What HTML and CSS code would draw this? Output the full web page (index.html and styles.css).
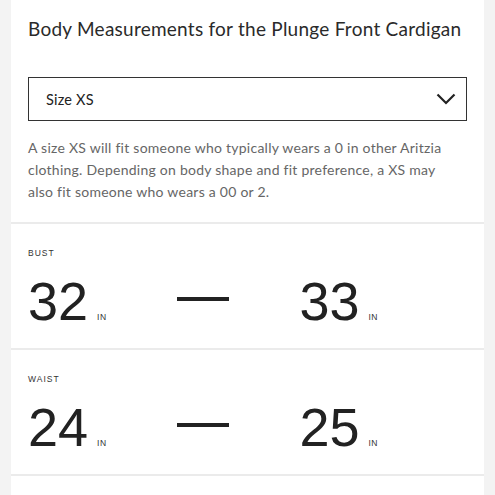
FILE: index.html
```html
<!DOCTYPE html>
<html lang="en">
<head>
<meta charset="utf-8">
<title>Body Measurements</title>
<link rel="stylesheet" href="styles.css">
</head>
<body>
<main class="panel">
  <section class="intro">
    <h1 class="title">Body Measurements for the Plunge Front Cardigan</h1>
    <div class="select">
      <span class="select-label">Size XS</span>
      <svg class="chevron" width="20" height="12" viewBox="0 0 20 12"><path d="M1.5 1.5 L10 10 L18.5 1.5" fill="none" stroke="#222" stroke-width="2.2"/></svg>
    </div>
    <p class="desc">A size XS will fit someone who typically wears a 0 in other Aritzia clothing. Depending on body shape and fit preference, a XS may also fit someone who wears a 00 or 2.</p>
  </section>
  <section class="measure">
    <div class="label">Bust</div>
    <div class="range">
      <div class="val"><span class="num">32</span><span class="unit">IN</span></div>
      <div class="dash"></div>
      <div class="val"><span class="num">33</span><span class="unit">IN</span></div>
    </div>
  </section>
  <section class="measure">
    <div class="label">Waist</div>
    <div class="range">
      <div class="val"><span class="num">24</span><span class="unit">IN</span></div>
      <div class="dash"></div>
      <div class="val"><span class="num">25</span><span class="unit">IN</span></div>
    </div>
  </section>
</main>
</body>
</html>
```
FILE: styles.css
```css
html, body {
  margin: 0;
  padding: 0;
}
body {
  background: #f3f3f3;
  font-family: "Lato", "Liberation Sans", sans-serif;
  color: #222;
  height: 495px;
  overflow: hidden;
}
.panel {
  margin: 0 11px;
  background: #fff;
  min-height: 495px;
}
.intro {
  padding: 16px 17px 19px;
  border-bottom: 2px solid #ebebeb;
}
.title {
  margin: 0;
  font-size: 19px;
  font-weight: 400;
  line-height: 26px;
  letter-spacing: 0.25px;
  color: #2a2a2a;
  white-space: nowrap;
}
.select {
  margin-top: 35px;
  height: 42px;
  border: 1.5px solid #333;
  display: flex;
  align-items: center;
  justify-content: space-between;
  padding: 0 10px 0 17px;
}
.select-label {
  font-size: 14.5px;
  letter-spacing: 0.2px;
  color: #222;
}
.chevron {
  display: block;
}
.desc {
  margin: 16px 14px 0 0;
  font-size: 14px;
  line-height: 22px;
  letter-spacing: 0.25px;
  color: #666;
}
.measure {
  padding: 24px 17px 17px;
  border-bottom: 2px solid #ebebeb;
}
.label {
  font-family: "Liberation Sans", sans-serif;
  font-size: 8.5px;
  letter-spacing: 1px;
  text-transform: uppercase;
  color: #333;
  line-height: 10px;
}
.range {
  margin-top: 13px;
  width: 350px;
  display: flex;
  align-items: center;
  justify-content: space-between;
}
.val {
  display: flex;
  align-items: baseline;
}
.num {
  font-family: "Liberation Sans", sans-serif;
  font-size: 54px;
  line-height: 60px;
  color: #222;
}
.unit {
  font-family: "Liberation Sans", sans-serif;
  font-size: 8.5px;
  letter-spacing: 0.5px;
  color: #333;
  margin-left: 9px;
}
.dash {
  width: 52px;
  height: 4px;
  margin-top: -4px;
  background: #222;
}
```
